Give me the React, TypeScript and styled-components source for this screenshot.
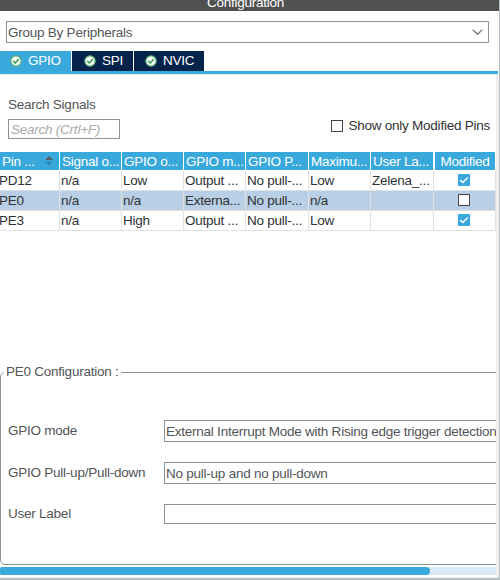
import React from "react";
import styled, { createGlobalStyle } from "styled-components";

const Global = createGlobalStyle`
  * { box-sizing: border-box; }
  body { margin: 0; background: #fff; overflow: hidden; }
`;

const blue = "#39a9dc";
const border = "#8c9297";
const ink = "#535557";

const Window = styled.div`
  width: 500px;
  height: 580px;
  display: flex;
  flex-direction: column;
  background: #fff;
  color: ${ink};
  font: 13.5px/16px "Liberation Sans", Arial, sans-serif;
  letter-spacing: -0.24px;
  white-space: nowrap;
  overflow: hidden;
  border-right: 1px solid #b4bfc3;
`;

const Title = styled.header`
  height: 11px;
  flex: none;
  display: flex;
  justify-content: center;
  align-items: flex-end;
  padding-right: 8px;
  line-height: 16px;
  background: #4f5150;
  color: #fff;
  overflow: hidden;
`;

const Select = styled.div`
  display: flex;
  align-items: center;
  justify-content: space-between;
  flex: none;
  width: 483px;
  height: 22px;
  margin: 10px 0 8px 6px;
  padding: 1px 5px 0 1px;
  border: 1px solid ${border};
`;

const Tabs = styled.nav`
  display: flex;
  flex: none;
  gap: 1px;
  width: 498px;
  height: 23px;
  border-bottom: 3px solid ${blue};
`;

const Tab = styled.div<{ $width: number; $pad: number; $active?: boolean }>`
  display: flex;
  align-items: center;
  gap: 6px;
  width: ${(p) => p.$width}px;
  height: 20px;
  padding: 0 0 1px ${(p) => p.$pad}px;
  background: ${(p) => (p.$active ? blue : "#03234b")};
  color: #fff;
`;

const Body = styled.main`
  flex: none;
  width: 499px;
  height: 503px;
  border-top: 1px solid #ededee;
  border-right: 3px solid #efeff0;
  overflow: hidden;
`;

const SearchBar = styled.section`
  display: flex;
  justify-content: space-between;
  height: 77px;
  padding: 22px 6px 0 8px;
`;

const SearchGroup = styled.div`
  display: flex;
  flex-direction: column;
  gap: 6px;
`;

const SearchInput = styled.div`
  width: 112px;
  height: 20px;
  padding: 2px 0 0 2px;
  border: 1px solid ${border};
  color: #aaa;
  font-style: italic;
`;

const Option = styled.label`
  display: flex;
  align-items: center;
  align-self: flex-start;
  gap: 5px;
  height: 16px;
  margin-top: 21px;
  color: #333;
`;

const Box = styled.span<{ $checked?: boolean }>`
  display: flex;
  flex: none;
  width: 12px;
  height: 12px;
  border: ${(p) => (p.$checked ? "0" : "1px solid #444")};
  background: ${(p) => (p.$checked ? blue : "#fff")};
`;

const Grid = styled.div`
  width: 496px;
`;

const columns = "60px 62px 62px 62px 63px 62px 63px 62px";

const HeadRow = styled.div`
  display: grid;
  grid-template-columns: ${columns};
  height: 18px;
`;

const Head = styled.div<{ $center?: boolean }>`
  display: flex;
  align-items: center;
  justify-content: ${(p) => (p.$center ? "center" : "space-between")};
  margin-right: 1px;
  padding: 1px 0 0 2px;
  background: ${blue};
  color: #fff;
  overflow: hidden;

  &:last-child { margin: 0 1px 0 1px; padding-left: 0; }
`;

const Row = styled.div<{ $selected?: boolean }>`
  display: grid;
  grid-template-columns: ${columns};
  height: 20px;
  background: ${(p) => (p.$selected ? "#b8cfe6" : "#fff")};
  color: #303234;
`;

const Cell = styled.div<{ $center?: boolean }>`
  display: flex;
  justify-content: ${(p) => (p.$center ? "center" : "flex-start")};
  align-items: center;
  padding: ${(p) => (p.$center ? "0 1px 2px 0" : "0 0 0 1px")};
  border-right: 1px solid #dfe1e3;
  border-bottom: 1px solid #dfe1e3;
  overflow: hidden;

  &:first-child { padding-left: 0; text-indent: -1px; }
`;

const GridBody = styled.div`
  margin-top: 1px;
`;

const Fieldset = styled.fieldset`
  width: 510px;
  height: 201px;
  margin: 133px 0 0;
  padding: 40px 0 0 7px;
  border: 1px solid ${border};
  border-radius: 5px;
`;

const Legend = styled.legend`
  margin-left: -4px;
  padding: 0 2px;
`;

const Field = styled.div<{ $gap: number }>`
  display: grid;
  grid-template-columns: 156px 350px;
  align-items: center;
  margin-bottom: ${(p) => p.$gap}px;
`;

const Value = styled.div<{ $height: number }>`
  height: ${(p) => p.$height}px;
  padding: 3px 0 0 1px;
  border: 1px solid ${border};
`;

const ScrollTrack = styled.div`
  height: 8px;
  margin-top: 2px;
  background: #d9e9f6;
`;

const ScrollThumb = styled.div`
  width: 430px;
  height: 8px;
  border-radius: 2px 4px 4px 2px;
  background: ${blue};
`;

const Footer = styled.footer`
  flex: none;
  height: 3px;
  border-bottom: 2px solid #b4c2c2;
  background: #efeff0;
`;

const StatusIcon = () => (
  <svg width="12" height="12" viewBox="0 0 12 12">
    <circle cx="6" cy="6" r="5.2" fill="#fff" stroke="#54ad6b" strokeWidth="1.2" />
    <path d="M3.2 5.9 5.3 8 8.8 4.1" fill="none" stroke="#45a55e" strokeWidth="1.7" />
  </svg>
);

const Check = () => (
  <svg width="12" height="12" viewBox="0 0 12 12">
    <path d="M2.2 6 4.8 8.5 9.8 3.5" fill="none" stroke="#fff" strokeWidth="1.4" />
  </svg>
);

const Chevron = () => (
  <svg width="11" height="7" viewBox="0 0 11 7">
    <path d="M.7.7 5.5 5.3 10.3.7" fill="none" stroke="#777" strokeWidth="1.2" />
  </svg>
);

const SortIcon = () => (
  <svg width="15" height="16" viewBox="0 0 15 16">
    <path d="M1 6 5 2 9 6Z" fill="#555e64" />
    <path d="M1 7.5 5 11.5 9 7.5Z" fill="#2d88b4" />
  </svg>
);

const heads = ["Pin ...", "Signal o...", "GPIO o...", "GPIO m...", "GPIO P...", "Maximu...", "User La..."];

const rows = [
  { cells: ["PD12", "n/a", "Low", "Output ...", "No pull-...", "Low", "Zelena_..."], modified: true },
  { cells: ["PE0", "n/a", "n/a", "Externa...", "No pull-...", "n/a", ""], modified: false, selected: true },
  { cells: ["PE3", "n/a", "High", "Output ...", "No pull-...", "Low", ""], modified: true },
];

export default function App() {
  return (
    <Window>
      <Global />
      <Title>Configuration</Title>
      <Select>
        Group By Peripherals
        <Chevron />
      </Select>
      <Tabs>
        <Tab $width={71} $pad={10} $active><StatusIcon />GPIO</Tab>
        <Tab $width={61} $pad={12}><StatusIcon />SPI</Tab>
        <Tab $width={70} $pad={11}><StatusIcon />NVIC</Tab>
      </Tabs>
      <Body>
        <SearchBar>
          <SearchGroup>
            <span>Search Signals</span>
            <SearchInput>Search (Crtl+F)</SearchInput>
          </SearchGroup>
          <Option><Box />Show only Modified Pins</Option>
        </SearchBar>
        <Grid>
          <HeadRow>
            {heads.map((h, i) => (
              <Head key={h}>{h}{i === 0 && <SortIcon />}</Head>
            ))}
            <Head $center>Modified</Head>
          </HeadRow>
          <GridBody>
            {rows.map((r) => (
              <Row key={r.cells[0]} $selected={r.selected}>
                {r.cells.map((c, i) => <Cell key={i}>{c}</Cell>)}
                <Cell $center><Box $checked={r.modified}>{r.modified && <Check />}</Box></Cell>
              </Row>
            ))}
          </GridBody>
        </Grid>
        <Fieldset>
          <Legend>PE0 Configuration :</Legend>
          <Field $gap={20}>
            GPIO mode
            <Value $height={22}>External Interrupt Mode with Rising edge trigger detection</Value>
          </Field>
          <Field $gap={20}>
            GPIO Pull-up/Pull-down
            <Value $height={22}>No pull-up and no pull-down</Value>
          </Field>
          <Field $gap={0}>
            User Label
            <Value $height={20} />
          </Field>
        </Fieldset>
        <ScrollTrack><ScrollThumb /></ScrollTrack>
      </Body>
      <Footer />
    </Window>
  );
}
